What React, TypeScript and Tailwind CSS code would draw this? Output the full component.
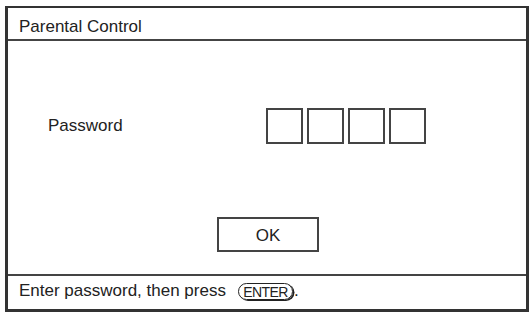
export default function App() {
  return (
    <div className="w-[529px] h-[312px] bg-white overflow-hidden font-['Liberation_Sans',Arial,sans-serif] text-[#222]">
      <div className="ml-[5px] mt-[6px] w-[524px] h-[306px] flex flex-col border-[#333] border-l-[3px] border-r-[3px] border-t-2 border-b-[3px]">
        {/* title bar */}
        <div className="h-[33px] border-b-2 border-[#444] pl-[11px] pt-[9px] text-[17px] leading-[20px]">
          Parental Control
        </div>

        {/* body */}
        <div className="flex-1 flex flex-col">
          <div className="flex items-center pl-[40px] mt-[67px]">
            <span className="w-[218px] text-[17px] leading-[20px]">Password</span>
            <div className="flex gap-[4px]">
              {[0, 1, 2, 3].map((i) => (
                <div key={i} className="w-[37px] h-[36px] border-2 border-[#444]" />
              ))}
            </div>
          </div>
          <div className="mt-[73px] ml-[209px] w-[102px] h-[35px] border-2 border-[#444] flex items-center justify-center pt-[2px] text-[17px] leading-[20px]">
            OK
          </div>
        </div>

        {/* footer */}
        <div className="h-[35px] border-t-2 border-[#444] pl-[11px] pt-[5px] flex items-start text-[17px] leading-[20px]">
          <span>Enter password, then press</span>
          <span className="ml-[12px] mt-[2px] h-[17px] w-[55px] rounded-full border-[1.5px] border-[#222] shadow-[1.5px_1px_0_#222] flex items-center justify-center text-[14px] leading-none tracking-[-0.6px]">
            ENTER
          </span>
          <span className="ml-[1px]">.</span>
        </div>
      </div>
    </div>
  );
}
